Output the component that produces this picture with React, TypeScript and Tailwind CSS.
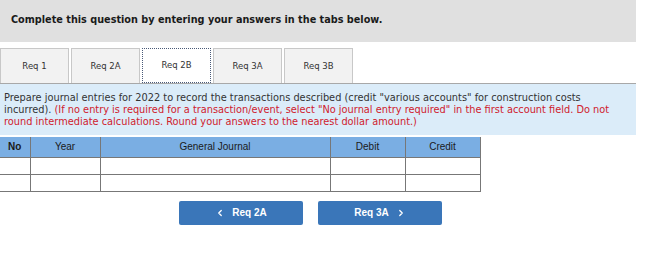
import { ChevronLeft, ChevronRight } from 'lucide-react';

const TABS = ['Req 1', 'Req 2A', 'Req 2B', 'Req 3A', 'Req 3B'];
const ACTIVE = 'Req 2B';

const COLS = [
  { label: 'No', w: 'w-[30px]', bold: true },
  { label: 'Year', w: 'w-[70px]' },
  { label: 'General Journal', w: 'w-[230px]' },
  { label: 'Debit', w: 'w-[75px]' },
  { label: 'Credit', w: 'w-[75px]' },
];

export default function App() {
  return (
    <div className="w-[652px] h-[278px] bg-white overflow-hidden font-['DejaVu_Sans',sans-serif] text-[#222]">
      {/* instruction bar */}
      <div className="w-[636px] h-[42px] bg-[#e0e0e0] flex items-center pl-[11px] pb-[1px]">
        <span className="text-[9.7px] font-bold text-[#1a1a1a]">
          Complete this question by entering your answers in the tabs below.
        </span>
      </div>

      {/* tabs */}
      <div className="w-[636px] mt-[6px] flex gap-[2px] border-b border-[#a8a8a8]">
        {TABS.map((t) => (
          <div
            key={t}
            className={
              t === ACTIVE
                ? 'w-[69px] h-[35px] -mb-px bg-white border border-dotted border-[#4a5a78] flex items-center justify-center text-[8.5px] text-[#333]'
                : 'w-[69px] h-[35px] bg-[#f2f2f2] border border-b-0 border-[#c8c8c8] flex items-center justify-center text-[8.5px] text-[#333]'
            }
          >
            {t}
          </div>
        ))}
      </div>

      {/* question text */}
      <div className="w-[636px] h-[51px] bg-[#dbecf9] px-[4px] pt-[8px] text-[9.8px] leading-[12px] text-[#333]">
        Prepare journal entries for 2022 to record the transactions described (credit "various accounts" for construction costs
        <br />
        incurred).{' '}
        <span className="text-[#d0202c]">
          (If no entry is required for a transaction/event, select "No journal entry required" in the first account field. Do
          not
          <br />
          round intermediate calculations. Round your answers to the nearest dollar amount.)
        </span>
      </div>

      {/* journal table */}
      <table className="mt-[2px] border-collapse font-['Liberation_Sans',sans-serif] text-[10px]">
        <thead>
          <tr className="h-[20px] bg-[#7aaee3]">
            {COLS.map((c, i) => (
              <th
                key={c.label}
                className={`${c.w} p-0 ${c.bold ? 'font-bold' : 'font-normal'} text-[#1a1a1a] border-[#777] ${
                  i > 0 ? 'border-l' : ''
                } ${i === COLS.length - 1 ? 'border-r' : ''}`}
              >
                {c.label}
              </th>
            ))}
          </tr>
        </thead>
        <tbody>
          {[0, 1].map((r) => (
            <tr key={r} className="h-[17px]">
              {COLS.map((c, i) => (
                <td
                  key={c.label}
                  className={`p-0 border-t border-[#777] ${i > 0 ? 'border-l' : ''} ${
                    i === COLS.length - 1 ? 'border-r' : ''
                  } ${r === 1 ? 'border-b' : ''}`}
                />
              ))}
            </tr>
          ))}
        </tbody>
      </table>

      {/* navigation */}
      <div className="mt-[9px] pl-[179px] flex gap-[15px] font-['Liberation_Sans',sans-serif]">
        <button className="w-[124px] h-[24px] bg-[#3a76b9] rounded-[2px] text-white text-[10px] font-bold flex items-center justify-center gap-[7px]">
          <ChevronLeft className="w-[10px] h-[10px]" strokeWidth={3} />
          Req 2A
        </button>
        <button className="w-[124px] h-[24px] bg-[#3a76b9] rounded-[2px] text-white text-[10px] font-bold flex items-center justify-center gap-[7px]">
          Req 3A
          <ChevronRight className="w-[10px] h-[10px]" strokeWidth={3} />
        </button>
      </div>
    </div>
  );
}
